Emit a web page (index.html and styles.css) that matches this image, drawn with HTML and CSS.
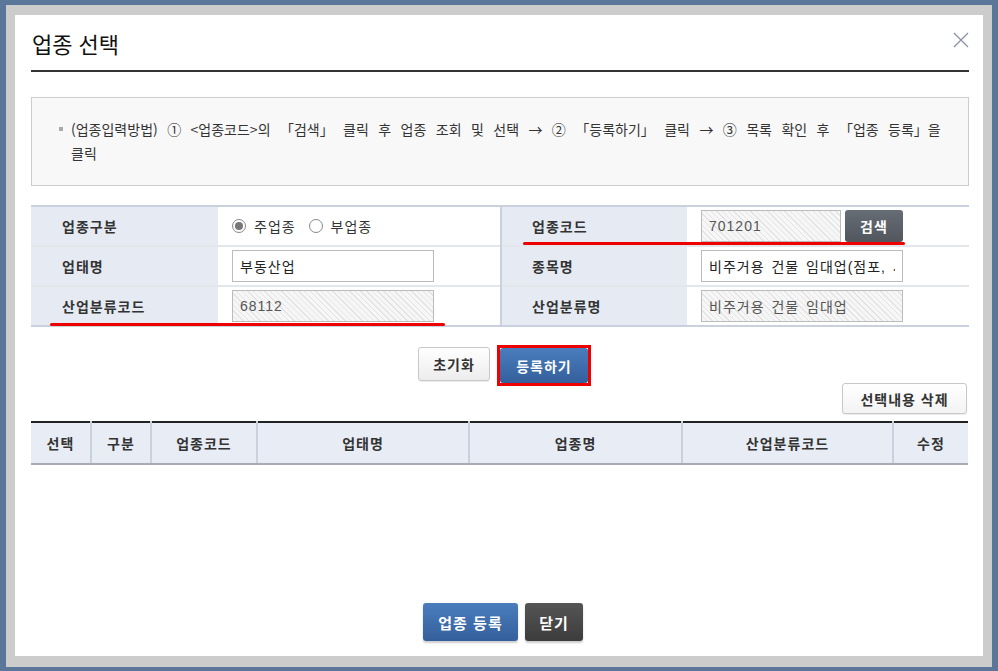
FILE: index.html
```html
<!DOCTYPE html>
<html lang="ko">
<head>
    <meta charset="UTF-8">
    <meta name="viewport" content="width=device-width, initial-scale=1.0">
    <title>업종 선택</title>
    <link rel="stylesheet" href="styles.css">
</head>
<body>
    <div class="frame">
        <div class="dialog">
            <div class="dialog-head">
                <h1>업종 선택</h1>
                <button class="close" type="button" aria-label="닫기">
                    <svg width="16" height="16" viewBox="0 0 16 16"><path d="M1 1 L15 15 M15 1 L1 15" stroke="#8a90a8" stroke-width="1.3" fill="none"/></svg>
                </button>
            </div>

            <div class="guide">
                <p>(업종입력방법) ① &lt;업종코드&gt;의 「검색」 클릭 후 업종 조회 및 선택 → ② 「등록하기」 클릭 → ③ 목록 확인 후 「업종 등록」을 클릭</p>
            </div>

            <div class="form-wrap">
                <table class="form-table">
                    <tr>
                        <th>업종구분</th>
                        <td>
                            <label class="radio"><input type="radio" name="kind" checked> 주업종</label>
                            <label class="radio"><input type="radio" name="kind"> 부업종</label>
                        </td>
                        <th class="sep">업종코드</th>
                        <td>
                            <input class="field field-code locked" type="text" value="701201" readonly>
                            <button class="btn btn-search" type="button">검색</button>
                        </td>
                    </tr>
                    <tr>
                        <th>업태명</th>
                        <td><input class="field" type="text" value="부동산업"></td>
                        <th class="sep">종목명</th>
                        <td><input class="field" type="text" value="비주거용 건물 임대업(점포, 사무실 등)"></td>
                    </tr>
                    <tr>
                        <th>산업분류코드</th>
                        <td><input class="field locked" type="text" value="68112" readonly></td>
                        <th class="sep">산업분류명</th>
                        <td><input class="field locked" type="text" value="비주거용 건물 임대업" readonly></td>
                    </tr>
                </table>
                <span class="mark mark-code"></span>
                <span class="mark mark-class"></span>
            </div>

            <div class="actions">
                <button class="btn btn-light" type="button">초기화</button>
                <button class="btn btn-blue btn-marked" type="button">등록하기</button>
            </div>

            <div class="list-tools">
                <button class="btn btn-white" type="button">선택내용 삭제</button>
            </div>

            <table class="list-table">
                <thead>
                    <tr>
                        <th class="c-check">선택</th>
                        <th class="c-kind">구분</th>
                        <th class="c-code">업종코드</th>
                        <th class="c-type">업태명</th>
                        <th class="c-item">업종명</th>
                        <th class="c-class">산업분류코드</th>
                        <th class="c-edit">수정</th>
                    </tr>
                </thead>
                <tbody></tbody>
            </table>

            <div class="footer">
                <button class="btn btn-blue btn-big" type="button">업종 등록</button>
                <button class="btn btn-dark btn-big" type="button">닫기</button>
            </div>
        </div>
    </div>
</body>
</html>
```

FILE: styles.css
```css
body {
    margin: 0;
    background-color: #5a7799;
    font-family: "Liberation Sans", "Noto Sans CJK KR", sans-serif;
    color: #333;
}
.frame {
    margin: 5px 6px 4px 6px;
    border-style: solid;
    border-color: #cccccc;
    border-width: 10px 9px 11px 9px;
    background-color: white;
    height: 641px;
}
.dialog {
    height: 100%;
    box-sizing: border-box;
    padding: 0 14px 0 16px;
    display: flex;
    flex-direction: column;
}
.dialog-head {
    height: 55px;
    display: flex;
    align-items: center;
    justify-content: space-between;
    border-bottom: 2px solid #333;
}
.dialog-head h1 {
    margin: 0 0 0 1px;
    font-size: 22px;
    font-weight: normal;
    color: #111;
}
.close {
    border: none;
    background: none;
    padding: 0;
    width: 16px;
    height: 16px;
    margin-bottom: 5px;
    cursor: pointer;
}
.close svg {
    display: block;
}
.guide {
    margin-top: 25px;
    border: 1px solid #cccccc;
    background-color: #f8f8f8;
    padding: 19px 24px 20px 27px;
}
.guide p {
    margin: 0;
    position: relative;
    padding-left: 12px;
    font-family: "Noto Sans CJK KR", sans-serif;
    font-size: 14px;
    line-height: 24px;
    word-spacing: 5.5px;
    color: #333;
}
.guide p::before {
    content: '';
    position: absolute;
    left: 0;
    top: 10px;
    width: 4px;
    height: 4px;
    background-color: #aaa;
}
.form-wrap {
    position: relative;
    margin-top: 19px;
}
table {
    border-collapse: collapse;
    width: 100%;
}
.form-table {
    border-top: 2px solid #c8d1dd;
    border-bottom: 2px solid #c8d1dd;
}
.form-table tr + tr {
    border-top: 2px solid #e3e6eb;
}
.form-table th {
    width: 156px;
    height: 38px;
    padding: 0 0 0 31px;
    background-color: #e6ebf3;
    text-align: left;
    font-size: 14px;
    letter-spacing: 1px;
    color: #333;
}
.form-table th.sep {
    width: 155px;
    padding-left: 30px;
    border-left: 2px solid #c8d1dd;
}
.form-table td {
    width: 268px;
    padding: 0 0 0 14px;
    font-size: 14px;
    letter-spacing: 1px;
}
.field {
    width: 202px;
    height: 32px;
    box-sizing: border-box;
    border: 1px solid #bbbbbb;
    padding: 0 7px;
    font-family: "Liberation Sans", "Noto Sans CJK KR", sans-serif;
    font-size: 14px;
    letter-spacing: 1px;
    word-spacing: 2px;
    color: #222;
    background-color: white;
    vertical-align: middle;
}
.field.locked {
    color: #555;
    background-color: #f6f6f6;
    background-image: repeating-linear-gradient(45deg, #f6f6f6 0, #f6f6f6 3px, #e4e4e4 3px, #e4e4e4 4px);
}
.field-code {
    width: 140px;
}
.radio {
    display: inline-flex;
    align-items: center;
    margin-right: 8px;
    color: #333;
}
.radio input {
    appearance: none;
    -webkit-appearance: none;
    width: 14px;
    height: 14px;
    margin: 0 8px 0 0;
    border: 1px solid #888;
    border-radius: 50%;
    background-color: white;
    position: relative;
}
.radio input:checked::after {
    content: '';
    position: absolute;
    left: 2px;
    top: 2px;
    width: 8px;
    height: 8px;
    border-radius: 50%;
    background-color: #777;
}
.mark {
    position: absolute;
    height: 3px;
    background-color: #ee0000;
    border-radius: 2px;
}
.mark-code {
    left: 492px;
    width: 382px;
    top: 37px;
}
.mark-class {
    left: 19px;
    width: 395px;
    top: 118px;
}
.btn {
    font-family: "Liberation Sans", "Noto Sans CJK KR", sans-serif;
    font-weight: bold;
    font-size: 14px;
    border-radius: 3px;
    cursor: pointer;
    letter-spacing: 1px;
}
.btn-search {
    width: 58px;
    height: 32px;
    margin-left: -1px;
    border: none;
    color: white;
    background: linear-gradient(to bottom, #666c75, #52575e);
    vertical-align: middle;
}
.actions {
    margin-top: 20px;
    display: flex;
    justify-content: center;
    gap: 10px;
    padding-left: 6px;
}
.btn-light {
    width: 72px;
    height: 34px;
    border: 1px solid #c8c8c8;
    color: #333;
    background: linear-gradient(to bottom, #ffffff, #ececec);
    box-shadow: 0 1px 1px rgba(0, 0, 0, 0.08);
}
.btn-blue {
    border: none;
    color: white;
    background: linear-gradient(to bottom, #4a7dbd, #345f9c);
}
.btn-marked {
    position: relative;
    width: 88px;
    height: 35px;
    margin-top: 1px;
}
.btn-marked::after {
    content: '';
    position: absolute;
    left: -3px;
    right: -3px;
    top: -3px;
    bottom: -3px;
    border: 3px solid #ee0000;
}
.list-tools {
    display: flex;
    justify-content: flex-end;
    padding-right: 2px;
}
.btn-white {
    width: 125px;
    height: 31px;
    border: 1px solid #c8c8c8;
    color: #333;
    background: linear-gradient(to bottom, #ffffff, #f3f3f3);
    box-shadow: 0 1px 1px rgba(0, 0, 0, 0.08);
}
.list-table {
    margin-top: 7px;
    width: calc(100% - 1px);
    border-top: 2px solid #222;
}
.list-table th {
    height: 40px;
    padding: 0;
    background-color: #e8edf5;
    border-bottom: 2px solid #a8acb2;
    border-left: 2px solid #c8d1dd;
    font-size: 14px;
    letter-spacing: 1px;
    color: #333;
}
.list-table th:first-child {
    border-left: none;
}
.c-check { width: 59px; }
.c-kind { width: 58px; }
.c-code { width: 104px; }
.c-type { width: 210px; }
.c-item { width: 211px; }
.c-class { width: 209px; }
.footer {
    margin-top: auto;
    margin-bottom: 15px;
    display: flex;
    justify-content: center;
    gap: 7px;
    padding-left: 6px;
}
.btn-big {
    height: 38px;
    font-size: 15px;
    box-shadow: 0 2px 2px rgba(0, 0, 0, 0.2);
}
.btn-blue.btn-big {
    width: 95px;
}
.btn-dark {
    width: 58px;
    border: none;
    color: white;
    background: linear-gradient(to bottom, #555, #3c3c3c);
}
```
